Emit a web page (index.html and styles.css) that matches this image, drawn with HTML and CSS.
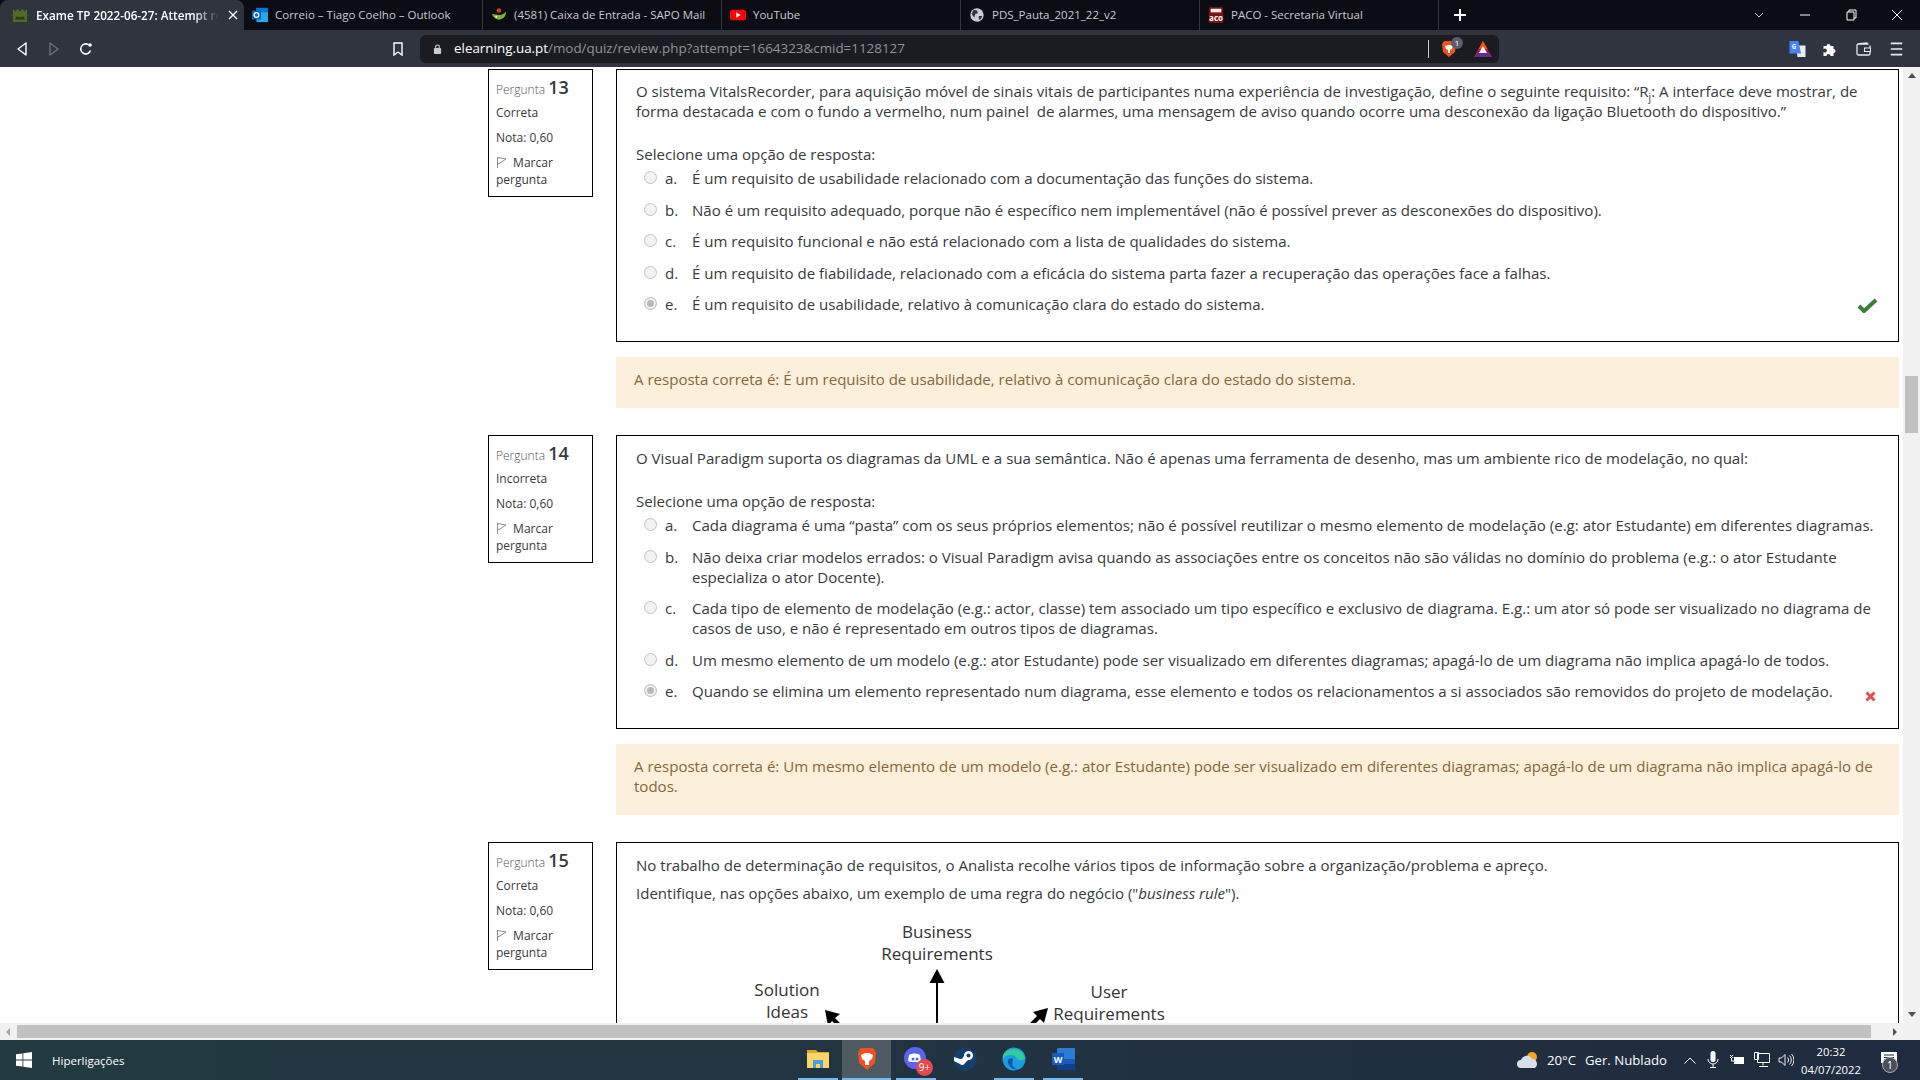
FILE: index.html
```html
<!DOCTYPE html>
<html lang="pt">
<head>
  <meta charset="UTF-8">
  <title>Exame TP 2022-06-27: Attempt review</title>
  <link rel="stylesheet" href="styles.css">
</head>
<body>
<div class="browser">

  <div class="tabbar">
    <div class="tab tab-active">
      <svg class="favicon" viewBox="0 0 18 18"><path fill="#4f6b22" d="M1 2l3 3 2-3 3 3 3-3 2 3 3-3v15H1z"/><path fill="#2c3a14" d="M4 11h4l1 1 1-1h4v3H4z"/></svg>
      <span class="tab-title">Exame TP 2022-06-27: Attempt review</span>
      <svg class="tab-close" viewBox="0 0 10 10"><path d="M1 1l8 8M9 1l-8 8" stroke="#fff" stroke-width="1.4"/></svg>
    </div>
    <div class="tab">
      <svg class="favicon" viewBox="0 0 18 18"><rect x="5" y="1" width="13" height="16" fill="#28a8ea"/><rect x="5" y="1" width="13" height="5" fill="#0078d4"/><rect x="0" y="4" width="10" height="10" fill="#0364b8"/><circle cx="5" cy="9" r="2.6" fill="none" stroke="#fff" stroke-width="1.5"/></svg>
      <span class="tab-title">Correio – Tiago Coelho – Outlook</span>
    </div>
    <div class="tab">
      <svg class="favicon" viewBox="0 0 18 18"><path fill="#7ab52c" d="M1 8c2 6 9 9 15 2l1-5c-3 3-5 4-8 4z"/><circle cx="9" cy="4" r="2.6" fill="#d9381e"/><circle cx="6" cy="11" r="1.2" fill="#fff"/></svg>
      <span class="tab-title">(4581) Caixa de Entrada - SAPO Mail</span>
    </div>
    <div class="tab">
      <svg class="favicon" viewBox="0 0 18 18"><rect x="0" y="3" width="18" height="12" rx="3" fill="#f00"/><path fill="#fff" d="M7 6l5 3-5 3z"/></svg>
      <span class="tab-title">YouTube</span>
    </div>
    <div class="tab">
      <svg class="favicon" viewBox="0 0 18 18"><circle cx="9" cy="9" r="7.500" fill="#c9ccd1"/><path fill="#30343f" d="M5 3l4 1 1 3-3 1-1 4-3-4zM11 10l4 0-2 4-2 0z"/></svg>
      <span class="tab-title">PDS_Pauta_2021_22_v2</span>
    </div>
    <div class="tab tab-last">
      <svg class="favicon" viewBox="0 0 18 18"><rect x="1" y="0" width="16" height="18" fill="#7b1113"/><rect x="3" y="2" width="12" height="4" fill="#fff"/><text x="9" y="16" class="paco-mark">aco</text></svg>
      <span class="tab-title">PACO - Secretaria Virtual</span>
    </div>
    <svg class="new-tab" viewBox="0 0 12 12"><path d="M6 0v12M0 6h12" stroke="#fff" stroke-width="2"/></svg>
    <div class="win-controls">
      <svg viewBox="0 0 12 12"><path d="M2 4l4 4 4-4" fill="none" stroke="#c9ccd1"/></svg>
      <svg viewBox="0 0 12 12"><path d="M1 6h10" stroke="#fff"/></svg>
      <svg viewBox="0 0 12 12"><path d="M2 3h7v8H2zM4 3V1h7v8H9" fill="none" stroke="#fff"/></svg>
      <svg viewBox="0 0 12 12"><path d="M1 1l10 10M11 1L1 11" stroke="#fff"/></svg>
    </div>
  </div>

  <div class="toolbar">
    <div class="nav-btns">
      <svg viewBox="0 0 14 14"><path d="M11 1v12L3 7z" fill="none" stroke="#fff" stroke-width="1.4" stroke-linejoin="round"/></svg>
      <svg viewBox="0 0 14 14"><path d="M3 1v12l8-6z" fill="none" stroke="#6c707a" stroke-width="1.4" stroke-linejoin="round"/></svg>
      <svg viewBox="0 0 14 14"><path d="M11.500 8.500A5 5 0 1 1 9.500 2.700" fill="none" stroke="#fff" stroke-width="1.500"/><circle cx="11" cy="3" r="1.800" fill="#fff"/></svg>
    </div>
    <svg class="bookmark" viewBox="0 0 12 14"><path d="M2 1h8v12L6 10l-4 3z" fill="none" stroke="#fff" stroke-width="1.400"/></svg>
    <div class="urlbar">
      <svg class="lock" viewBox="0 0 10 12"><path d="M3 5V3.500a2 2 0 0 1 4 0V5" fill="none" stroke="#c9ccd1" stroke-width="1.200"/><rect x="1" y="5" width="8" height="6.500" rx="1" fill="#c9ccd1"/></svg>
      <span class="url"><b>elearning.ua.pt</b>/mod/quiz/review.php?attempt=1664323&amp;cmid=1128127</span>
      <i class="url-sep"></i>
      <span class="shield">
        <svg viewBox="0 0 16 18"><path fill="#f1501f" d="M3 1h10l2 3-1 8-6 5-6-5-1-8z"/><path fill="#fff" d="M4 6l3-1h2l3 1-1 3-2 1v3H7v-3L5 9z"/></svg>
        <span class="shield-count">1</span>
      </span>
      <svg class="bat" viewBox="0 0 18 16"><path fill="#9e1f63" d="M9 0l9 16H0z"/><path fill="#ff5000" d="M9 0l4.500 8h-9z"/><path fill="#662d91" d="M0 16l4.500-4h9l4.500 4z"/><path fill="#fff" d="M9 5l4 7H5z"/></svg>
    </div>
    <div class="ext-btns">
      <svg viewBox="0 0 18 18"><path fill="#e8eaed" d="M7 5h11v13H9z"/><path fill="#4285f4" d="M0 0h10l3 14H0z"/><text x="5" y="9" class="g-mark">G</text></svg>
      <svg viewBox="0 0 16 16"><path fill="#fff" d="M1 5h3a2 2 0 1 1 4 0h3v3a2 2 0 1 1 0 4v3H8a2 2 0 1 0-4 0H1v-4a2 2 0 1 0 0-3z"/></svg>
      <svg viewBox="0 0 16 16"><path d="M13 3H3a1.500 1.500 0 0 0-1.500 1.500v8A1.500 1.500 0 0 0 3 14h10a1.500 1.500 0 0 0 1.500-1.500v-8M2 3l10-1" fill="none" stroke="#e8eaed" stroke-width="1.300"/><rect x="9" y="7" width="6" height="3.500" fill="#30343f" stroke="#e8eaed"/></svg>
      <svg viewBox="0 0 14 14"><path d="M2 2h10M2 7h10M2 12h10" stroke="#e8eaed" stroke-width="1.500"/></svg>
    </div>
  </div>

  <div class="viewport">
    <div class="page">

      <div class="que">
        <div class="que-info">
          <h3 class="que-no">Pergunta <span>13</span></h3>
          <div class="que-state">Correta</div>
          <div class="que-grade">Nota: 0,60</div>
          <div class="que-flag">
            <svg viewBox="0 0 11 13"><path d="M1.500 1v11M1.500 1.500L10 3 4 7l-2.500 1" fill="none" stroke="#8a8a8a"/></svg>
            Marcar pergunta
          </div>
        </div>
        <div class="que-main">
          <div class="que-box que-box-top">
            <p class="que-text">O sistema VitalsRecorder, para aquisição móvel de sinais vitais de participantes numa experiência de investigação, define o seguinte requisito: “R<sub>j</sub>: A interface deve mostrar, de forma destacada e com o fundo a vermelho, num painel&nbsp; de alarmes, uma mensagem de aviso quando ocorre uma desconexão da ligação Bluetooth do dispositivo.”</p>
            <p class="prompt">Selecione uma opção de resposta:</p>
            <div class="option"><i class="radio"></i><span class="opt-key">a.</span><span>É um requisito de usabilidade relacionado com a documentação das funções do sistema.</span></div>
            <div class="option"><i class="radio"></i><span class="opt-key">b.</span><span>Não é um requisito adequado, porque não é específico nem implementável (não é possível prever as desconexões do dispositivo).</span></div>
            <div class="option"><i class="radio"></i><span class="opt-key">c.</span><span>É um requisito funcional e não está relacionado com a lista de qualidades do sistema.</span></div>
            <div class="option"><i class="radio"></i><span class="opt-key">d.</span><span>É um requisito de fiabilidade, relacionado com a eficácia do sistema parta fazer a recuperação das operações face a falhas.</span></div>
            <div class="option"><i class="radio radio-on"></i><span class="opt-key">e.</span><span>É um requisito de usabilidade, relativo à comunicação clara do estado do sistema.</span>
              <svg class="mark mark-ok" viewBox="0 0 21 15"><path d="M2 8l5 5L19 2" fill="none" stroke="#3a7e35" stroke-width="4"/></svg>
            </div>
          </div>
          <div class="outcome">A resposta correta é: É um requisito de usabilidade, relativo à comunicação clara do estado do sistema.</div>
        </div>
      </div>

      <div class="que">
        <div class="que-info">
          <h3 class="que-no">Pergunta <span>14</span></h3>
          <div class="que-state">Incorreta</div>
          <div class="que-grade">Nota: 0,60</div>
          <div class="que-flag">
            <svg viewBox="0 0 11 13"><path d="M1.500 1v11M1.500 1.500L10 3 4 7l-2.500 1" fill="none" stroke="#8a8a8a"/></svg>
            Marcar pergunta
          </div>
        </div>
        <div class="que-main">
          <div class="que-box">
            <p class="que-text">O Visual Paradigm suporta os diagramas da UML e a sua semântica. Não é apenas uma ferramenta de desenho, mas um ambiente rico de modelação, no qual:</p>
            <p class="prompt prompt-single">Selecione uma opção de resposta:</p>
            <div class="option"><i class="radio"></i><span class="opt-key">a.</span><span>Cada diagrama é uma “pasta” com os seus próprios elementos; não é possível reutilizar o mesmo elemento de modelação (e.g: ator Estudante) em diferentes diagramas.</span></div>
            <div class="option"><i class="radio"></i><span class="opt-key">b.</span><span>Não deixa criar modelos errados: o Visual Paradigm avisa quando as associações entre os conceitos não são válidas no domínio do problema (e.g.: o ator Estudante especializa o ator Docente).</span></div>
            <div class="option"><i class="radio"></i><span class="opt-key">c.</span><span>Cada tipo de elemento de modelação (e.g.: actor, classe) tem associado um tipo específico e exclusivo de diagrama. E.g.: um ator só pode ser visualizado no diagrama de casos de uso, e não é representado em outros tipos de diagramas.</span></div>
            <div class="option"><i class="radio"></i><span class="opt-key">d.</span><span>Um mesmo elemento de um modelo (e.g.: ator Estudante) pode ser visualizado em diferentes diagramas; apagá-lo de um diagrama não implica apagá-lo de todos.</span></div>
            <div class="option"><i class="radio radio-on"></i><span class="opt-key">e.</span><span>Quando se elimina um elemento representado num diagrama, esse elemento e todos os relacionamentos a si associados são removidos do projeto de modelação.</span>
              <svg class="mark mark-bad" viewBox="0 0 11 11"><path d="M1.500 1.500l8 8M9.500 1.500l-8 8" stroke="#d9534f" stroke-width="3"/></svg>
            </div>
          </div>
          <div class="outcome">A resposta correta é: Um mesmo elemento de um modelo (e.g.: ator Estudante) pode ser visualizado em diferentes diagramas; apagá-lo de um diagrama não implica apagá-lo de todos.</div>
        </div>
      </div>

      <div class="que">
        <div class="que-info">
          <h3 class="que-no">Pergunta <span>15</span></h3>
          <div class="que-state">Correta</div>
          <div class="que-grade">Nota: 0,60</div>
          <div class="que-flag">
            <svg viewBox="0 0 11 13"><path d="M1.500 1v11M1.500 1.500L10 3 4 7l-2.500 1" fill="none" stroke="#8a8a8a"/></svg>
            Marcar pergunta
          </div>
        </div>
        <div class="que-main">
          <div class="que-box">
            <p class="que-line">No trabalho de determinação de requisitos, o Analista recolhe vários tipos de informação sobre a organização/problema e apreço.</p>
            <p class="que-line">Identifique, nas opções abaixo, um exemplo de uma regra do negócio ("<em>business rule</em>").</p>
            <svg class="req-diagram" viewBox="0 0 500 200" width="500" height="200">
              <text x="237" y="23">Business</text>
              <text x="237" y="45">Requirements</text>
              <text x="87" y="81">Solution</text>
              <text x="87" y="103">Ideas</text>
              <text x="409" y="83">User</text>
              <text x="409" y="105">Requirements</text>
              <path d="M237 60v90" stroke="#000" stroke-width="2"/>
              <path d="M237 54l7.500 14h-15z"/>
              <path d="M125 95l15 4-5 4 10 10-3 3-10-10-4 5z"/>
              <path d="M348 93l-15 4 4 4-12 12 3 3 12-12 4 4z"/>
            </svg>
          </div>
        </div>
      </div>

    </div>
    <div class="vscroll">
      <i class="arrow-up"></i>
      <div class="vthumb"></div>
      <i class="arrow-down"></i>
    </div>
  </div>

  <div class="hscroll">
    <i class="arrow-left"></i>
    <div class="hthumb"></div>
    <i class="arrow-right"></i>
  </div>

  <div class="taskbar">
    <div class="start">
      <svg class="win-logo" viewBox="0 0 16 16"><path fill="#fff" d="M0 2.300l6.500-.9v6.200H0zM7.300 1.300L16 0v7.600H7.300zM0 8.400h6.500v6.200L0 13.700zM7.300 8.400H16V16l-8.700-1.300z"/></svg>
      <span>Hiperligações</span>
    </div>
    <div class="apps">
      <div class="app app-open">
        <svg viewBox="0 0 24 24"><path fill="#e0a82e" d="M1 3h9l2 2h11v5H1z"/><path fill="#fbd568" d="M1 6h22v15H1z"/><path fill="#4a9de0" d="M7 13h10v8h-3v-4h-4v4H7z"/></svg>
      </div>
      <div class="app app-active">
        <svg viewBox="0 0 20 24"><path fill="#f1501f" d="M4 1h12l3 4-1 11-8 7-8-7L1 5z"/><path fill="#fff" d="M4 8l4-2h4l4 2-1 4-3 2v4H8v-4l-3-2z"/></svg>
      </div>
      <div class="app app-open">
        <svg viewBox="0 0 24 24"><circle cx="11" cy="11" r="11" fill="#5865f2"/><path fill="#fff" d="M5 8c3-2 8-2 11 0l1 6-2 1H6l-2-1z"/><circle cx="9" cy="12" r="1.500" fill="#5865f2"/><circle cx="13" cy="12" r="1.500" fill="#5865f2"/></svg>
        <span class="app-badge">9+</span>
      </div>
      <div class="app">
        <svg viewBox="0 0 24 24"><circle cx="12" cy="12" r="11.500" fill="#14406b"/><path fill="#fff" d="M1 14l6 3a3 3 0 0 0 5-1l3-3a4.500 4.500 0 1 0-4-4l-2 3a3 3 0 0 0-2 0L1 10z"/><circle cx="15.500" cy="8.500" r="2" fill="#14406b"/></svg>
      </div>
      <div class="app app-open">
        <svg viewBox="0 0 24 24"><circle cx="12" cy="12" r="11.500" fill="#1b9de2"/><path fill="#35c9a0" d="M1 9C3 2 18-3 23 11c-2 3-6 3-8 1C13 7 5 6 1 12z"/><path fill="#0c59a4" d="M6 13c-1 6 5 11 12 9-7 1-9-5-7-9 1-2-4-2-5 0z"/></svg>
      </div>
      <div class="app app-open">
        <svg viewBox="0 0 24 24"><rect x="6" y="1" width="18" height="22" rx="1" fill="#2b7cd3"/><rect x="6" y="12" width="18" height="5" fill="#185abd"/><rect x="6" y="17" width="18" height="6" fill="#103f91"/><rect x="1" y="6" width="12" height="12" fill="#185abd"/><text x="7" y="16" class="word-mark">W</text></svg>
      </div>
    </div>
    <div class="tray">
      <svg class="tray-weather" viewBox="0 0 22 18"><circle cx="15" cy="6" r="5" fill="#f5a623"/><path fill="#d9dfe8" d="M4 17a4 4 0 0 1 0-8 6 6 0 0 1 11-1 5 5 0 0 1 3 9z"/></svg>
      <span class="tray-temp">20°C</span>
      <span class="tray-cond">Ger. Nublado</span>
      <svg class="tray-chev" viewBox="0 0 12 7"><path d="M0.500 6.500L6 1l5.500 5.500" fill="none" stroke="#fff"/></svg>
      <svg class="tray-mic" viewBox="0 0 12 18"><rect x="3.500" y="0" width="5" height="11" rx="2.500" fill="#fff"/><path d="M1 8a5 5 0 0 0 10 0M6 13v3M3 16.500h6" fill="none" stroke="#fff"/></svg>
      <svg class="tray-power" viewBox="0 0 16 12"><rect x="5" y="3" width="10" height="7" fill="#fff"/><path d="M1 1l3 3M4 1L1 4M2.500 4v3h3" fill="none" stroke="#fff"/></svg>
      <svg class="tray-net" viewBox="0 0 16 16"><path d="M3.500 1.500h12v9h-12zM9 10.500v3M5 14.500h9M.5.500h4v7h-4z" fill="#1f2b3e" stroke="#fff"/></svg>
      <svg class="tray-vol" viewBox="0 0 16 14"><path d="M1 5h2.500L7 1.500v11L3.500 9H1zM9.500 4.500a3.500 3.500 0 0 1 0 5M11.500 2.500a6.500 6.500 0 0 1 0 9M13.500 1a8.500 8.500 0 0 1 0 12" fill="none" stroke="#fff" stroke-width="0.900"/></svg>
      <div class="clock"><span>20:32</span><span>04/07/2022</span></div>
      <div class="notif">
        <svg viewBox="0 0 16 14"><path fill="#fff" d="M0 0h16v11H7l-3 3v-3H0z"/><path d="M3 3h10M3 5.500h10M3 8h7" stroke="#1f2b3e"/></svg>
        <span class="notif-count">1</span>
      </div>
    </div>
  </div>

</div>
</body>
</html>
```

FILE: styles.css
```css
* {
  box-sizing: border-box;
}
html, body {
  margin: 0;
  padding: 0;
  height: 100%;
  overflow: hidden;
}
body {
  font-family: "Open Sans", "Noto Sans", sans-serif;
  background: #fff;
  color: #373a3c;
}
.browser {
  width: 1920px;
  height: 1080px;
  display: flex;
  flex-direction: column;
}

/* tab strip */
.tabbar {
  height: 30px;
  background: #0b0c14;
  display: flex;
  align-items: center;
  flex: none;
}
.tab {
  width: 239px;
  height: 30px;
  display: flex;
  align-items: center;
  gap: 7px;
  padding: 0 0 1px 8px;
  font-size: 11.5px;
  color: #c8cad0;
  white-space: nowrap;
  overflow: hidden;
  border-right: 1px solid #33363f;
  flex: none;
}
.tab-active {
  width: 244px;
  padding-left: 12px;
  gap: 8px;
  background: #30343f;
  border-right: none;
  border-radius: 8px 8px 0 0;
  color: #fff;
  font-size: 11.7px;
  font-weight: 600;
}
.tab-active .tab-title {
  width: 183px;
  overflow: hidden;
  -webkit-mask-image: linear-gradient(to right, #000 86%, transparent);
  mask-image: linear-gradient(to right, #000 86%, transparent);
}
.tab-close {
  width: 10px;
  height: 10px;
  margin-left: 1px;
  flex: none;
}
.favicon {
  width: 16px;
  height: 16px;
  flex: none;
}
.paco-mark {
  font-size: 9px;
  font-weight: 700;
  fill: #fff;
  text-anchor: middle;
}
.new-tab {
  width: 12px;
  height: 12px;
  margin-left: 15px;
  flex: none;
}
.win-controls {
  margin-left: auto;
  display: flex;
  gap: 34px;
  padding-right: 17px;
}
.win-controls svg {
  width: 12px;
  height: 12px;
}

/* address bar row */
.toolbar {
  height: 37px;
  background: #30343f;
  display: flex;
  align-items: center;
  flex: none;
}
.nav-btns {
  display: flex;
  gap: 18px;
  padding-left: 15px;
  width: 392px;
}
.nav-btns svg {
  width: 14px;
  height: 14px;
}
.bookmark {
  width: 12px;
  height: 14px;
  flex: none;
}
.urlbar {
  width: 1079px;
  height: 28px;
  margin-left: 16px;
  background: #1a1c22;
  border-radius: 6px;
  display: flex;
  align-items: center;
  padding-left: 13px;
  flex: none;
}
.lock {
  width: 9px;
  height: 12px;
  flex: none;
}
.url {
  margin-left: 12px;
  padding-bottom: 2px;
  font-size: 13.4px;
  color: #8f939b;
  width: 974px;
  white-space: nowrap;
}
.url b {
  color: #fff;
  font-weight: 400;
}
.url-sep {
  width: 1px;
  height: 18px;
  background: #c8cad0;
  flex: none;
}
.shield {
  margin-left: 12px;
  position: relative;
  width: 16px;
  height: 18px;
  flex: none;
}
.shield svg {
  width: 16px;
  height: 18px;
  display: block;
}
.shield-count {
  position: absolute;
  left: 10px;
  top: -3px;
  width: 12px;
  height: 12px;
  border-radius: 50%;
  background: #5b5f6b;
  color: #fff;
  font-size: 8px;
  line-height: 12px;
  text-align: center;
}
.bat {
  width: 18px;
  height: 16px;
  margin-left: 17px;
  flex: none;
}
.ext-btns {
  display: flex;
  align-items: center;
  gap: 16px;
  margin-left: 290px;
}
.ext-btns svg {
  width: 17px;
  height: 16px;
}
.g-mark {
  font-size: 7px;
  font-weight: 700;
  fill: #fff;
  text-anchor: middle;
}

/* page area */
.viewport {
  flex: 1;
  min-height: 0;
  display: flex;
}
.page {
  width: 1903px;
  height: 956px;
  overflow: hidden;
  padding: 2px 4px 0 488px;
}
.que {
  display: flex;
  align-items: flex-start;
  gap: 23px;
  margin-bottom: 27px;
}
.que-info {
  width: 105px;
  height: 128px;
  border: 1px solid #000;
  padding: 7px 7px;
  font-size: 12px;
  line-height: 17px;
  flex: none;
}
.que-no {
  margin: 0 0 4px;
  font-size: 12px;
  font-weight: 300;
  line-height: 20px;
  color: #555;
}
.que-no span {
  font-size: 18px;
  font-weight: 600;
  color: #373a3c;
}
.que-state,
.que-grade {
  margin-bottom: 8px;
}
.que-flag svg {
  width: 11px;
  height: 13px;
  margin-right: 3px;
  vertical-align: -2px;
}
.que-main {
  flex: 1;
  min-width: 0;
}
.que-box {
  border: 1px solid #000;
  padding: 12px 12px 27px 19px;
  font-size: 15.05px;
  line-height: 20px;
}
.que-box-top {
  padding-top: 11px;
  padding-bottom: 27px;
}
.que-text {
  margin: 0 0 23px;
}
.que-text sub {
  font-size: 10px;
  line-height: 0;
}
.prompt {
  margin: 0 0 4px;
}
.prompt-single {
  margin-top: 20px;
}
.que-line {
  margin: 0 0 8px;
}
.option {
  position: relative;
  display: flex;
  padding-bottom: 11.5px;
}
.option:last-of-type {
  padding-bottom: 0;
}
.radio {
  width: 13px;
  height: 13px;
  margin: 3px 8px 0 8px;
  border: 1px solid #c4c4c4;
  border-radius: 50%;
  background: #f2f2f2;
  flex: none;
}
.radio-on {
  background: #b8b8b8;
  box-shadow: inset 0 0 0 2px #f2f2f2;
}
.opt-key {
  width: 27px;
  flex: none;
}
.mark {
  position: absolute;
}
.mark-ok {
  right: 8px;
  top: 4px;
  width: 21px;
  height: 15px;
}
.mark-bad {
  right: 10px;
  top: 10px;
  width: 11px;
  height: 11px;
}
.outcome {
  margin-top: 15px;
  padding: 12px 18px 19px;
  background: #fcefdc;
  color: #85673a;
  font-size: 15.05px;
  line-height: 20px;
}
.req-diagram {
  display: block;
  margin: 12px 0 0 64px;
}
.req-diagram text {
  font-size: 17px;
  fill: #333;
  text-anchor: middle;
}

/* scrollbars */
.vscroll {
  width: 17px;
  background: #f1f1f1;
  display: flex;
  flex-direction: column;
  align-items: center;
  flex: none;
}
.arrow-up,
.arrow-down {
  width: 0;
  height: 0;
  border-left: 4px solid transparent;
  border-right: 4px solid transparent;
}
.arrow-up {
  margin-top: 6px;
  border-bottom: 5px solid #505050;
}
.arrow-down {
  margin-top: auto;
  margin-bottom: 6px;
  border-top: 5px solid #505050;
}
.vthumb {
  width: 13px;
  height: 57px;
  margin-top: 298px;
  background: #c1c1c1;
}
.hscroll {
  height: 17px;
  background: #f1f1f1;
  display: flex;
  align-items: center;
  flex: none;
}
.hthumb {
  width: 1854px;
  height: 13px;
  margin-left: 7px;
  background: #c1c1c1;
}
.arrow-left,
.arrow-right {
  width: 0;
  height: 0;
  border-top: 4px solid transparent;
  border-bottom: 4px solid transparent;
}
.arrow-left {
  margin-left: 6px;
  border-right: 4px solid #a3a3a3;
}
.arrow-right {
  margin-left: 22px;
  border-left: 4px solid #505050;
}

/* windows taskbar */
.taskbar {
  height: 40px;
  background: linear-gradient(to right, #233a42, #1f2b3e);
  display: flex;
  align-items: center;
  color: #fff;
  flex: none;
}
.start {
  width: 793px;
  display: flex;
  align-items: center;
  gap: 20px;
  padding-left: 16px;
  font-size: 11.5px;
  flex: none;
}
.win-logo {
  width: 16px;
  height: 16px;
}
.apps {
  display: flex;
  align-items: stretch;
  height: 40px;
}
.app {
  width: 49px;
  display: flex;
  align-items: center;
  justify-content: center;
  position: relative;
  padding-bottom: 2px;
}
.app svg {
  width: 24px;
  height: 24px;
}
.app-open::after,
.app-active::after {
  content: "";
  position: absolute;
  left: 5px;
  right: 4px;
  bottom: 0;
  height: 2px;
  background: #76b9ed;
}
.app-active {
  background: #4d5a61;
}
.app-active::after {
  left: 0;
  right: 0;
}
.app-badge {
  position: absolute;
  left: 25px;
  top: 19px;
  width: 17px;
  height: 17px;
  border-radius: 50%;
  background: #e5484d;
  font-size: 10px;
  line-height: 17px;
  text-align: center;
}
.word-mark {
  font-size: 9px;
  font-weight: 700;
  fill: #fff;
  text-anchor: middle;
}
.tray {
  margin-left: auto;
  display: flex;
  align-items: center;
  font-size: 13.2px;
  height: 40px;
  padding-right: 23px;
}
.tray-weather {
  width: 22px;
  height: 18px;
}
.tray-temp {
  margin-left: 8px;
}
.tray-cond {
  margin-left: 9px;
}
.tray-chev {
  width: 12px;
  height: 7px;
  margin-left: 17px;
}
.tray-mic {
  width: 12px;
  height: 18px;
  margin-left: 11px;
}
.tray-power {
  width: 16px;
  height: 12px;
  margin-left: 10px;
}
.tray-net {
  width: 16px;
  height: 16px;
  margin-left: 9px;
}
.tray-vol {
  width: 16px;
  height: 14px;
  margin-left: 8px;
}
.clock {
  width: 66px;
  margin-left: 4px;
  display: flex;
  flex-direction: column;
  align-items: center;
  gap: 3px;
  font-size: 11.3px;
  line-height: 15px;
}
.notif {
  position: relative;
  width: 16px;
  height: 14px;
  margin-left: 17px;
  margin-top: -3px;
}
.notif svg {
  display: block;
  width: 16px;
  height: 14px;
}
.notif-count {
  position: absolute;
  left: 1px;
  top: 5px;
  width: 16px;
  height: 16px;
  border-radius: 50%;
  background: #4a4f57;
  border: 1px solid #aaa;
  font-size: 11px;
  line-height: 14px;
  text-align: center;
}
```
